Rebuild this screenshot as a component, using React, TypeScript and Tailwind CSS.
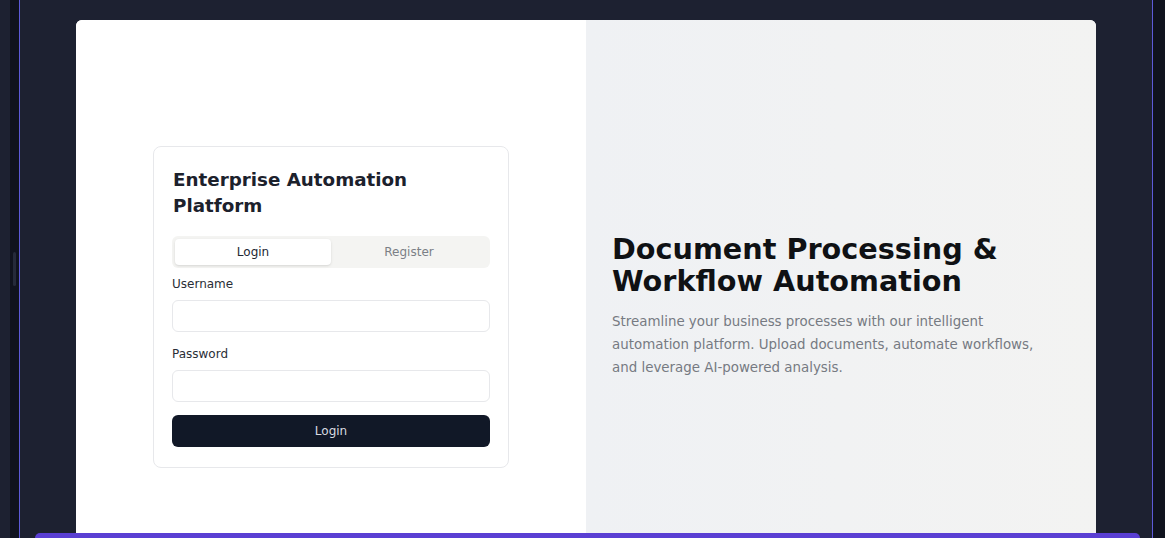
import { useState } from "react";

const LoginCard = () => {
  const [tab, setTab] = useState<"login" | "register">("login");

  return (
    <div className="w-[356px] rounded-lg border border-[#e7e8eb] bg-white px-[18px] pt-5 pb-5">
      <h1 className="pl-px text-[18.3px] leading-[26px] font-bold text-[#1c212c]">
        Enterprise Automation Platform
      </h1>
      <div className="mt-[17px] flex h-8 rounded-md bg-[#f4f4f2] p-[3px]">
        <button
          onClick={() => setTab("login")}
          className={`flex-1 rounded text-[12px] ${
            tab === "login" ? "bg-white text-[#222733] shadow-sm" : "text-[#7b7f86]"
          }`}
        >
          Login
        </button>
        <button
          onClick={() => setTab("register")}
          className={`flex-1 rounded text-[12px] ${
            tab === "register" ? "bg-white text-[#222733] shadow-sm" : "text-[#7b7f86]"
          }`}
        >
          Register
        </button>
      </div>
      <div className="mt-2 flex flex-col">
        <label className="text-[12px] leading-4 font-medium text-[#2a2e36]">Username</label>
        <input
          type="text"
          className="mt-2 h-8 rounded-md border border-[#e7e8eb] px-3 text-[12px] outline-none"
        />
        <label className="mt-[14px] text-[12px] leading-4 font-medium text-[#2a2e36]">
          Password
        </label>
        <input
          type="password"
          className="mt-2 h-8 rounded-md border border-[#e7e8eb] px-3 text-[12px] outline-none"
        />
        <button className="mt-[13px] h-8 rounded-md bg-[#111827] text-[12px] text-[#d8dbe0]">
          Login
        </button>
      </div>
    </div>
  );
};

export default function App() {
  return (
    <div className="relative flex h-[538px] w-full overflow-hidden bg-[#1d2131] font-['DejaVu_Sans',sans-serif]">
      {/* left gutter */}
      <div className="w-[10px] shrink-0" />
      <div className="flex w-[9px] shrink-0 items-center justify-center bg-[#10131e]">
        <div className="h-[34px] w-[3px] rounded-sm bg-[#252a3a]" />
      </div>
      <div className="w-px shrink-0 bg-[#5d5bd8]" />

      <main className="flex-1 px-[56px] pt-5">
        <div className="grid h-[573px] grid-cols-2 overflow-hidden rounded-md bg-white">
          <section className="flex items-center justify-center bg-white">
            <LoginCard />
          </section>
          <section className="flex items-center bg-gradient-to-r from-[#eff1f4] to-[#f3f3f2] px-[26px]">
            <div className="max-w-md">
              <h2 className="mb-[14px] text-[28.7px] leading-[32px] font-bold text-[#0f1114]">
                Document Processing &amp; Workflow Automation
              </h2>
              <p className="text-[13.4px] leading-[22.75px] text-[#767a82]">
                Streamline your business processes with our intelligent automation platform.
                Upload documents, automate workflows, and leverage AI-powered analysis.
              </p>
            </div>
          </section>
        </div>
      </main>

      {/* right gutter */}
      <div className="w-px shrink-0 bg-[#5d5bd8]" />
      <div className="w-[12px] shrink-0 bg-[#10131e]" />

      {/* bottom toolbar peeking in */}
      <div className="absolute bottom-0 left-[35px] right-[25px] h-[5px] rounded-t-xl bg-[#5a3fd3]" />
    </div>
  );
}
